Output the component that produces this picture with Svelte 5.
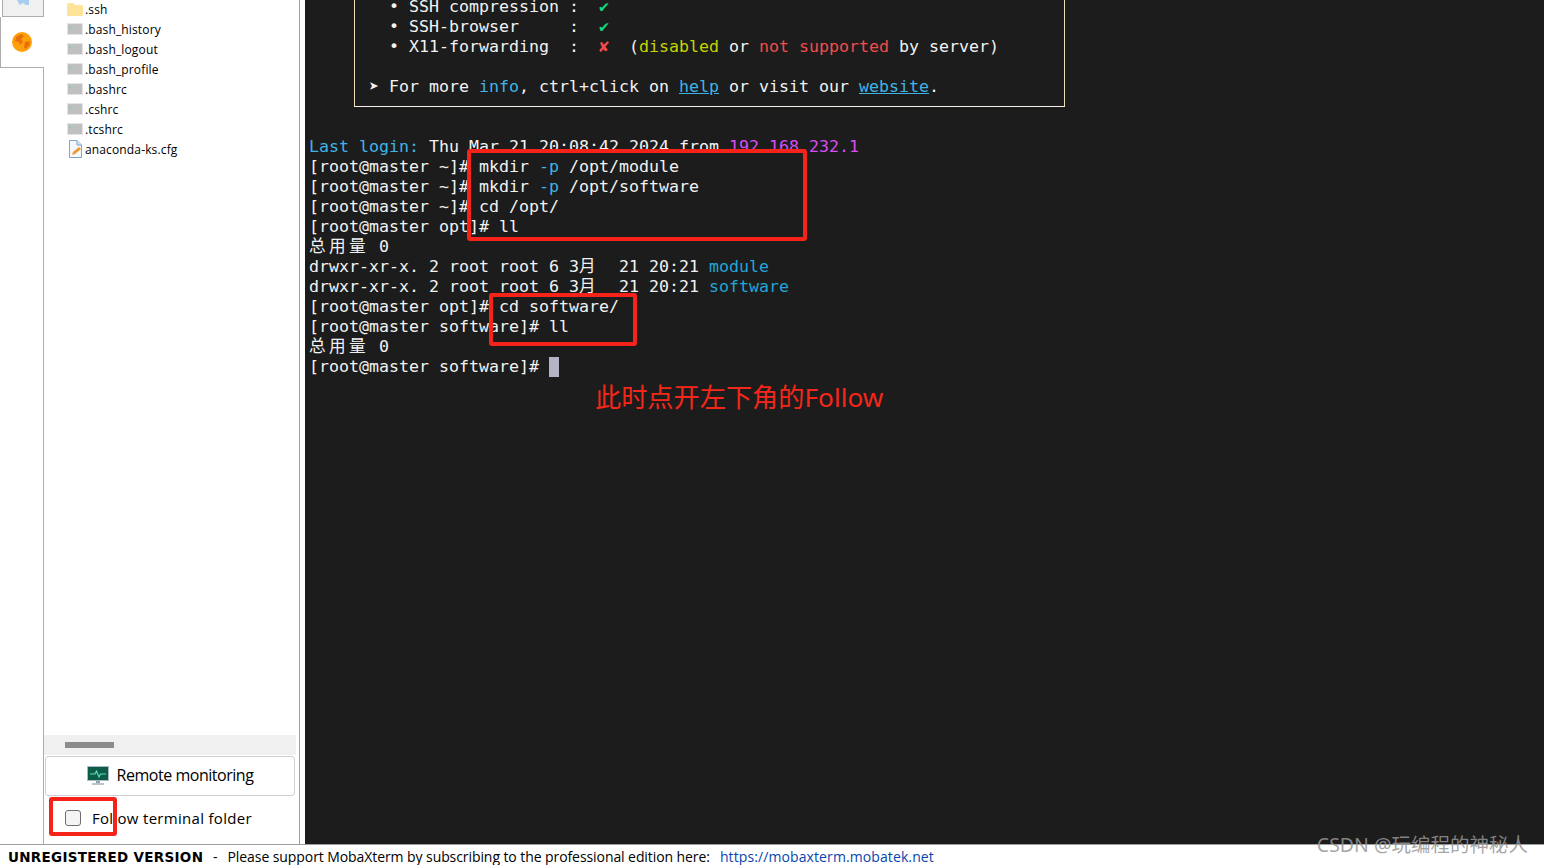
<script>
  const files = ['.bash_history', '.bash_logout', '.bash_profile', '.bashrc', '.cshrc', '.tcshrc'];
  const login = '[root@master ~]# ';
</script>

<div class="app">
  <div class="main">
    <aside class="rail">
      <div class="tab top">
        <svg width="12" height="6" viewBox="0 0 12 6"><path d="M0 0h12v5H9L6 3 3 5 1 2z" fill="#a9cdf0" /></svg>
      </div>
      <div class="tab active">
        <svg width="20" height="20" viewBox="0 0 20 20">
          <circle cx="10" cy="10" r="10" fill="#ff9f0a" />
          <path d="M4 5l5-3 3 2-3 3 2 3-3 3-1-3-4-1zM13 10l4-1 1 3-4 5-2-1z" fill="#e8700a" />
        </svg>
      </div>
    </aside>

    <section class="browser">
      <ul class="files">
        <li>
          <svg width="16" height="14" viewBox="0 0 16 14"><path d="M0 2.500Q0 1 1.500 1H6l2 2h6.500Q16 3 16 4.500V12.500Q16 14 14.500 14H1.500Q0 14 0 12.500z" fill="#fee39a" /></svg>
          <span>.ssh</span>
        </li>
        {#each files as name}
          <li>
            <svg width="16" height="12" viewBox="0 0 16 12">
              <rect width="16" height="12" fill="#e4e4e4" />
              <rect x="1" y="1" width="14" height="10" fill="#c0c0c0" />
              <path d="M2 3l2 1-2 1M4.500 5H6" fill="none" stroke="#8ec99a" stroke-width=".8" />
            </svg>
            <span>{name}</span>
          </li>
        {/each}
        <li>
          <svg width="16" height="18" viewBox="0 0 16 18">
            <path d="M2.500 .5H10L14.500 5V17.500H2.500z" fill="#f4f9fe" stroke="#7ea6cc" />
            <path d="M10 .5V5H14.500" fill="#cfe3f6" stroke="#7ea6cc" />
            <path d="M5 15l1-3 6-5 2 2-6 5z" fill="#f0982a" />
          </svg>
          <span>anaconda-ks.cfg</span>
        </li>
      </ul>

      <div class="scroll"><div class="thumb"></div></div>

      <button class="monitor">
        <svg width="22" height="20" viewBox="0 0 22 20">
          <rect x=".5" y=".5" width="21" height="14" fill="#0d5c4a" stroke="#a9bcc6" />
          <path d="M3 8h5l1.500-3 2.500 6 1.500-3H19" fill="none" stroke="#5fe0b0" stroke-width="1.100" />
          <rect x="9" y="15" width="4" height="2" fill="#8fa3ae" />
          <rect x="5" y="17" width="12" height="2" fill="#b4c4cc" />
        </svg>
        <span class="monitor-label">Remote monitoring</span>
      </button>

      <label class="follow">
        <span class="check"></span>
        <span>Follow terminal folder</span>
      </label>
    </section>

    <section class="terminal">
      <div class="banner">
<pre>  • SSH compression :  <b class="green">✔</b>
  • SSH-browser     :  <b class="green">✔</b>
  • X11-forwarding  :  <b class="red">✘</b>  (<i class="yellow">disabled</i> or <i class="red">not supported</i> by server)

➤ For more <i class="blue">info</i>, ctrl+click on <u class="blue">help</u> or visit our <u class="blue">website</u>.</pre>
      </div>

<pre class="session"><i class="blue">Last login:</i> Thu Mar 21 20:08:42 2024 from <i class="pink">192.168.232.1</i>
{login}mkdir <i class="blue">-p</i> /opt/module
{login}mkdir <i class="blue">-p</i> /opt/software
{login}cd /opt/
[root@master opt]# ll
<span class="cjk">总用量</span> 0
drwxr-xr-x. 2 root root 6 3<span class="cjk">月</span>  21 20:21 <i class="cyan">module</i>
drwxr-xr-x. 2 root root 6 3<span class="cjk">月</span>  21 20:21 <i class="cyan">software</i>
[root@master opt]# cd software/
[root@master software]# ll
<span class="cjk">总用量</span> 0
[root@master software]# <span class="cursor"></span></pre>

      <p class="note">此时点开左下角的Follow</p>
    </section>
  </div>

  <footer class="status">
    <b>UNREGISTERED VERSION</b>
    <span class="dash">-</span>
    <span class="support">Please support MobaXterm by subscribing to the professional edition here:</span>
    <span class="link">https://mobaxterm.mobatek.net</span>
  </footer>

  <div class="mark m1"></div>
  <div class="mark m2"></div>
  <div class="mark m3"></div>
  <div class="watermark">CSDN @玩编程的神秘人</div>
</div>

<style>
  :global(body) {
    margin: 0;
    overflow: hidden;
    background: #fff;
  }

  .app {
    position: relative;
    width: 1544px;
    height: 865px;
    overflow: hidden;
    display: flex;
    flex-direction: column;
    font-family: "DejaVu Sans", sans-serif;
    color: #000;
  }

  .main {
    flex: 1;
    min-height: 0;
    display: flex;
  }

  /* left tab rail */
  .rail {
    width: 44px;
    flex: none;
    box-sizing: border-box;
    display: flex;
    flex-direction: column;
    align-items: flex-end;
  }

  .tab {
    box-sizing: border-box;
    display: flex;
    justify-content: center;
  }

  .tab.top {
    width: 42px;
    height: 17px;
    background: #f0f0f0;
    border: 1px solid #adadad;
    border-top: 0;
  }

  .tab.active {
    width: 44px;
    height: 51px;
    padding-right: 2px;
    align-items: center;
    border-bottom: 1px solid #adadad;
    border-left: 1px solid #adadad;
  }

  .rail::after {
    content: "";
    flex: 1;
    width: 1px;
    background: #adadad;
  }

  /* file browser */
  .browser {
    width: 256px;
    flex: none;
    box-sizing: border-box;
    border-right: 1px solid #a0a0a0;
    display: flex;
    flex-direction: column;
  }

  .files {
    flex: 1;
    list-style: none;
    margin: -1px 0 0;
    padding: 0 0 0 23px;
  }

  .files li {
    height: 20px;
    display: flex;
    align-items: center;
    font-size: 12px;
    font-family: "Open Sans", sans-serif;
    letter-spacing: 0.14px;
  }

  .files svg {
    flex: none;
    margin-right: 2px;
  }

  .scroll {
    height: 20px;
    margin-right: 3px;
    background: #f0f0f0;
    display: flex;
    align-items: center;
    padding-left: 21px;
  }

  .thumb {
    width: 49px;
    height: 6px;
    background: #8c8c8c;
  }

  .monitor {
    height: 40px;
    margin: 1px 4px 0 1px;
    background: #fff;
    border: 1px solid #cfcfcf;
    border-radius: 3px;
    display: flex;
    align-items: center;
    justify-content: center;
    gap: 8px;
    padding: 0;
    font-family: "Open Sans", sans-serif;
    font-size: 16px;
    letter-spacing: -0.47px;
    color: #000;
  }

  .monitor-label {
    margin-bottom: 2px;
  }

  .follow {
    height: 48px;
    box-sizing: border-box;
    padding: 0 0 4px 21px;
    display: flex;
    align-items: center;
    gap: 11px;
    font-family: "Open Sans", sans-serif;
    font-size: 15px;
    letter-spacing: 0.3px;
  }

  .check {
    width: 16px;
    height: 16px;
    box-sizing: border-box;
    background: #f4f4f4;
    border: 1px solid #6e6e6e;
    border-radius: 3px;
  }

  /* terminal */
  .terminal {
    flex: 1;
    margin-left: 5px;
    min-width: 0;
    overflow: hidden;
    background: #1c1c1c;
    color: #f2f2f2;
    padding-left: 4px;
  }

  pre {
    margin: 0;
    font-family: "DejaVu Sans Mono", "Noto Sans CJK SC", monospace;
    font-size: 16.62px;
    line-height: 20px;
  }

  pre i {
    font-style: normal;
  }

  pre b {
    font-weight: normal;
  }

  .cjk {
    letter-spacing: 3.38px;
  }

  .banner {
    width: 711px;
    box-sizing: border-box;
    height: 110px;
    margin: -3px 0 0 45px;
    padding: 0 0 0 14px;
    border: 1px solid #f0dcb4;
    border-top: 0;
    border-bottom-color: #f4f0e8;
  }

  .session {
    margin-top: 30px;
  }

  .green { color: #14d67a; }
  .red { color: #f04c4c; }
  .yellow { color: #c4d400; }
  .blue { color: #3fb4e4; }
  .pink { color: #d94cf0; }
  .cyan { color: #21a6d6; }

  .cursor {
    display: inline-block;
    width: 10px;
    height: 20px;
    vertical-align: -5px;
    background: #b4b4c4;
  }

  .note {
    margin: 3px 0 0 286px;
    font-family: "Noto Sans", "Noto Sans CJK SC", sans-serif;
    font-size: 26.2px;
    line-height: 34px;
    color: #f5261a;
  }

  /* status bar */
  .status {
    height: 21px;
    flex: none;
    box-sizing: border-box;
    border-top: 1px solid #a0a0a0;
    padding: 3px 0 0 8px;
    display: flex;
    align-items: center;
    font-family: "Open Sans", sans-serif;
    font-size: 14px;
    white-space: pre;
  }

  .status b {
    font-family: "DejaVu Sans", sans-serif;
    font-size: 13.5px;
    width: 195px;
    letter-spacing: 0.3px;
  }

  .dash {
    margin: 0 10px;
  }

  .support {
    letter-spacing: -0.08px;
  }

  .link {
    margin-left: 10px;
    color: #0645ad;
    letter-spacing: 0.1px;
  }

  /* red annotations drawn over the screenshot */
  .mark {
    position: absolute;
    box-sizing: border-box;
    border: 4px solid #f5231a;
    border-radius: 3px;
  }

  .m1 { left: 467px; top: 149px; width: 340px; height: 92px; }
  .m2 { left: 489px; top: 293px; width: 148px; height: 53px; }
  .m3 { left: 49px; top: 797px; width: 68px; height: 39px; }

  .watermark {
    position: absolute;
    right: 16px;
    top: 831px;
    font-family: "Noto Sans", "Noto Sans CJK SC", sans-serif;
    font-size: 19.5px;
    line-height: 28px;
    color: rgba(150, 150, 150, 0.85);
  }
</style>
